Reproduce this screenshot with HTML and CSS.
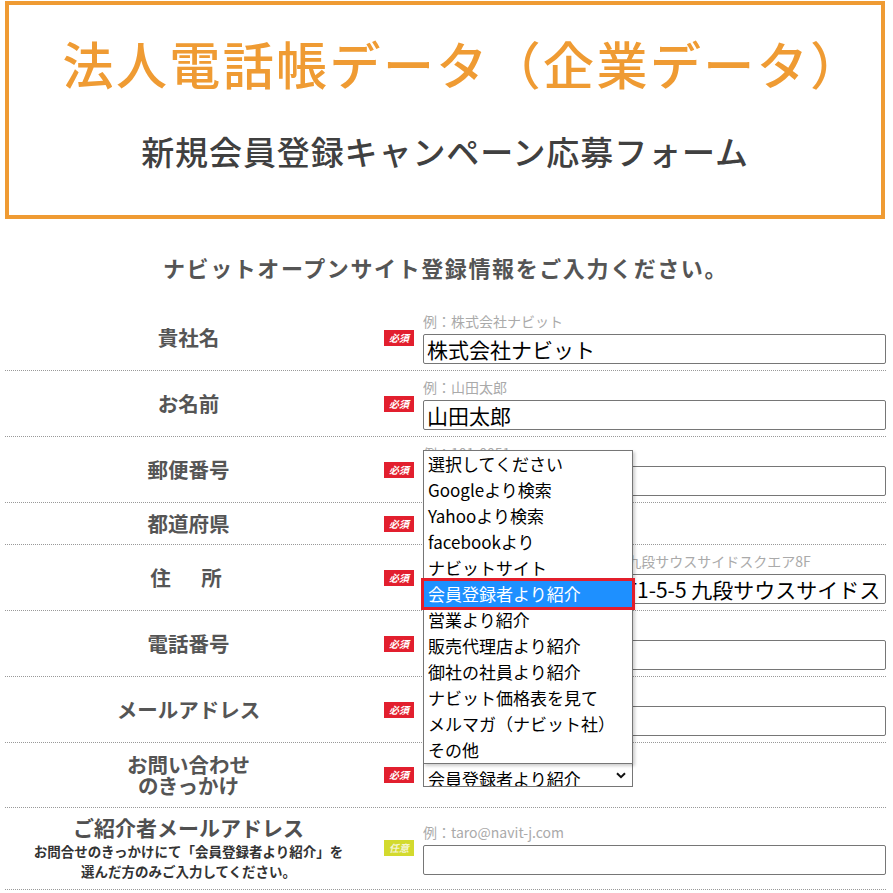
FILE: index.html
```html
<!DOCTYPE html>
<html lang="ja">
<head>
    <meta charset="UTF-8">
    <meta name="viewport" content="width=device-width, initial-scale=1.0">
    <title>新規会員登録キャンペーン応募フォーム</title>
    <link rel="stylesheet" href="styles.css">
</head>
<body>
    <div class="page">
        <!-- ヘッダー -->
        <div class="hero">
            <p class="hero-title">法人電話帳データ（企業データ）</p>
            <p class="hero-sub">新規会員登録キャンペーン応募フォーム</p>
        </div>

        <h2 class="form-title">ナビットオープンサイト登録情報をご入力ください。</h2>

        <form class="entry-form">
            <div class="row">
                <div class="row-label">貴社名</div>
                <div class="row-badge"><span class="badge req">必須</span></div>
                <div class="row-field">
                    <p class="example">例：株式会社ナビット</p>
                    <input class="text-input" type="text" value="株式会社ナビット">
                </div>
            </div>

            <div class="row">
                <div class="row-label">お名前</div>
                <div class="row-badge"><span class="badge req">必須</span></div>
                <div class="row-field">
                    <p class="example">例：山田太郎</p>
                    <input class="text-input" type="text" value="山田太郎">
                </div>
            </div>

            <div class="row">
                <div class="row-label">郵便番号</div>
                <div class="row-badge"><span class="badge req">必須</span></div>
                <div class="row-field">
                    <p class="example">例：101-0051</p>
                    <input class="text-input" type="text" value="">
                </div>
            </div>

            <div class="row row-short">
                <div class="row-label">都道府県</div>
                <div class="row-badge"><span class="badge req">必須</span></div>
                <div class="row-field">
                    <div class="fake-select pref-select">東京都</div>
                </div>
            </div>

            <div class="row">
                <div class="row-label label-spaced">住　所</div>
                <div class="row-badge"><span class="badge req">必須</span></div>
                <div class="row-field">
                    <p class="example">例：千代田区　神田神保町1-5-5 九段サウスサイドスクエア8F</p>
                    <input class="text-input" type="text" value="千代田区　神田神保町1-5-5 九段サウスサイドスクエア8F">
                </div>
            </div>

            <div class="row">
                <div class="row-label">電話番号</div>
                <div class="row-badge"><span class="badge req">必須</span></div>
                <div class="row-field">
                    <p class="example">例：03-5215-5713</p>
                    <input class="text-input" type="text" value="">
                </div>
            </div>

            <div class="row">
                <div class="row-label">メールアドレス</div>
                <div class="row-badge"><span class="badge req">必須</span></div>
                <div class="row-field">
                    <p class="example">例：taro@navit-j.com</p>
                    <input class="text-input" type="text" value="">
                </div>
            </div>

            <div class="row row-trigger">
                <div class="row-label">お問い合わせ<br>のきっかけ</div>
                <div class="row-badge"><span class="badge req">必須</span></div>
                <div class="row-field">
                    <div class="select-wrap">
                        <!-- 開いた状態のプルダウン -->
                        <ul class="select-menu">
                            <li>選択してください</li>
                            <li>Googleより検索</li>
                            <li>Yahooより検索</li>
                            <li>facebookより</li>
                            <li>ナビットサイト</li>
                            <li class="is-selected">会員登録者より紹介</li>
                            <li>営業より紹介</li>
                            <li>販売代理店より紹介</li>
                            <li>御社の社員より紹介</li>
                            <li>ナビット価格表を見て</li>
                            <li>メルマガ（ナビット社）</li>
                            <li>その他</li>
                        </ul>
                        <div class="fake-select trigger-select">
                            <span>会員登録者より紹介</span>
                            <svg class="chevron" width="10" height="7" viewBox="0 0 10 7"><path d="M1 1.2 L5 5.2 L9 1.2" fill="none" stroke="#111" stroke-width="2"/></svg>
                        </div>
                    </div>
                </div>
            </div>

            <div class="row row-referrer">
                <div class="row-label">
                    <span class="label-main">ご紹介者メールアドレス</span>
                    <span class="label-note">お問合せのきっかけにて「会員登録者より紹介」を<br>選んだ方のみご入力してください。</span>
                </div>
                <div class="row-badge"><span class="badge opt">任意</span></div>
                <div class="row-field">
                    <p class="example">例：taro@navit-j.com</p>
                    <input class="text-input" type="text" value="">
                </div>
            </div>
        </form>
    </div>
</body>
</html>
```
FILE: styles.css
```css
body {
    margin: 0;
    font-family: "Noto Sans CJK JP", "Noto Sans", sans-serif;
    background-color: #fff;
    color: #333;
}
.page {
    width: 881px;
    margin: 1px 0 0 5px;
}

/* ヘッダー */
.hero {
    border: 4px solid #ef9b33;
    width: 880px;
    box-sizing: border-box;
    padding: 32px 0 44px;
    text-align: center;
}
.hero-title {
    margin: 0;
    padding-left: 36px;
    font-size: 51px;
    line-height: 52px;
    font-weight: 500;
    color: #ef9b33;
    letter-spacing: 2.4px;
}
.hero-sub {
    margin: 42px 0 0;
    font-size: 33px;
    line-height: 40px;
    font-weight: 500;
    color: #404040;
    letter-spacing: 0.9px;
}

.form-title {
    margin: 33px 0 23px;
    font-size: 22px;
    line-height: 30px;
    font-weight: bold;
    color: #555;
    text-align: center;
    letter-spacing: 1.6px;
}

/* フォーム行 */
.row {
    display: grid;
    grid-template-columns: 367px 51px 1fr;
    align-items: center;
    padding: 6px 0;
    border-bottom: 1px dotted #999;
}
.row-short {
    padding: 6px 0;
}
.row-trigger {
    padding: 11px 0;
}
.row-referrer {
    padding: 7px 0 8px;
}
.row-label {
    text-align: center;
    font-size: 20.5px;
    line-height: 21px;
    font-weight: bold;
    color: #555;
}
.label-spaced {
    letter-spacing: 5px;
}
.label-main {
    display: block;
    line-height: 24px;
    font-size: 21px;
    color: #505050;
}
.label-note {
    display: block;
    margin-top: 2px;
    font-size: 13.5px;
    line-height: 20px;
    color: #333;
}
.row-badge {
    padding-left: 12px;
}
.badge {
    display: block;
    width: 30px;
    height: 16px;
    line-height: 16px;
    font-size: 10px;
    font-weight: bold;
    font-style: italic;
    color: #fff;
    text-align: center;
}
.badge.req {
    background-color: #e21f2e;
}
.badge.opt {
    background-color: #d3da2e;
    color: #f4f4d0;
}
.row-field {
    min-width: 0;
}
.example {
    margin: 0;
    height: 23px;
    line-height: 21px;
    font-size: 14px;
    color: #aaa;
    white-space: nowrap;
    overflow: hidden;
}
.text-input {
    display: block;
    width: 100%;
    height: 30px;
    box-sizing: border-box;
    padding: 0 3px;
    border: 1px solid #767676;
    border-radius: 2px;
    font-family: "Noto Sans CJK JP", sans-serif;
    font-size: 21px;
    color: #000;
    background: #fff;
}

/* セレクト */
.fake-select {
    box-sizing: border-box;
    width: 210px;
    border: 1px solid #767676;
    background: #fff;
    color: #000;
    font-size: 17px;
}
.pref-select {
    height: 29px;
    line-height: 27px;
    padding-left: 4px;
}
.select-wrap {
    position: relative;
    width: 210px;
}
.trigger-select {
    position: relative;
    height: 24px;
    overflow: hidden;
    padding: 6px 0 0 4px;
    line-height: 17px;
}
.chevron {
    position: absolute;
    right: 6px;
    top: 8px;
}
.select-menu {
    position: absolute;
    left: 0;
    bottom: 100%;
    width: 210px;
    box-sizing: border-box;
    margin: 0 0 -1px;
    padding: 0;
    list-style: none;
    border: 1px solid #767676;
    background: #fff;
    box-shadow: 2px 2px 3px rgba(0, 0, 0, 0.2);
    z-index: 10;
}
.select-menu li {
    height: 26px;
    line-height: 26px;
    padding-left: 4px;
    font-size: 17px;
    color: #000;
    white-space: nowrap;
}
.select-menu li.is-selected {
    background-color: #1e90ff;
    color: #fff;
    outline: 3px solid #e31e2b;
}
```
